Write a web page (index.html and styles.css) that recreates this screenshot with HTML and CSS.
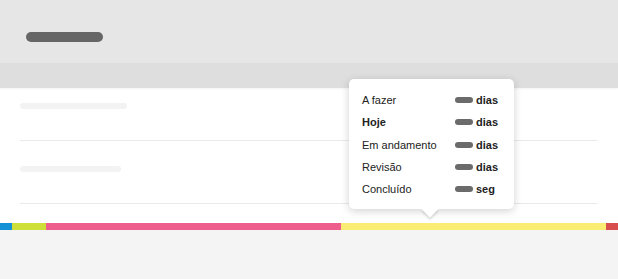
FILE: index.html
```html
<!DOCTYPE html>
<html lang="pt">
<head>
    <meta charset="UTF-8">
    <meta name="viewport" content="width=device-width, initial-scale=1.0">
    <title>Tempo por etapa</title>
    <link rel="stylesheet" href="styles.css">
</head>
<body>

    <div class="card">
        <div class="header">
            <span class="title-bar"></span>
        </div>
        <div class="tabs"></div>

        <div class="list">
            <div class="row row-first"><span class="skeleton"></span></div>
            <div class="row row-second"><span class="skeleton short"></span></div>
        </div>

        <div class="progress">
            <span class="seg blue" style="width: 12px"></span>
            <span class="seg green" style="width: 34px"></span>
            <span class="seg pink" style="width: 295px"></span>
            <span class="seg yellow" style="width: 265px"></span>
            <span class="seg red" style="flex: 1"></span>
        </div>

        <div class="footer"></div>

        <div class="tooltip">
            <div class="tip-row">
                <span class="label">A fazer</span>
                <span class="pill"></span>
                <span class="value">dias</span>
            </div>
            <div class="tip-row">
                <span class="label bold">Hoje</span>
                <span class="pill"></span>
                <span class="value">dias</span>
            </div>
            <div class="tip-row">
                <span class="label">Em andamento</span>
                <span class="pill"></span>
                <span class="value">dias</span>
            </div>
            <div class="tip-row">
                <span class="label">Revisão</span>
                <span class="pill"></span>
                <span class="value">dias</span>
            </div>
            <div class="tip-row">
                <span class="label">Concluído</span>
                <span class="pill"></span>
                <span class="value">seg</span>
            </div>
        </div>
    </div>

</body>
</html>
```

FILE: styles.css
```css
body {
    margin: 0;
    background-color: #f4f4f4;
    font-family: 'Liberation Sans', Arial, sans-serif;
    color: #222;
}

.card {
    position: relative;
    width: 618px;
    height: 279px;
    background-color: #fff;
    overflow: hidden;
}

.header {
    height: 63px;
    background-color: #e6e6e6;
    padding: 32px 0 0 26px;
    box-sizing: border-box;
}

.title-bar {
    display: block;
    width: 77px;
    height: 10px;
    border-radius: 5px;
    background-color: #666;
}

.tabs {
    height: 25px;
    background-color: #dedede;
    box-shadow: 0 1px 2px rgba(0, 0, 0, 0.05);
}

.list {
    padding: 0 21px 0 20px;
    height: 135px;
}

.row {
    border-bottom: 1px solid #e9e9e9;
    box-sizing: border-box;
}

.row-first {
    height: 53px;
    padding-top: 15px;
}

.row-second {
    height: 63px;
    padding-top: 25px;
}

.skeleton {
    display: block;
    width: 107px;
    height: 6px;
    border-radius: 3px;
    background-color: #f3f3f3;
}

.skeleton.short {
    width: 101px;
}

.progress {
    display: flex;
    height: 7px;
}

.seg {
    display: block;
    height: 100%;
}

.blue {
    background-color: #1591d5;
}

.green {
    background-color: #cfdf3a;
}

.pink {
    background-color: #ee5e8c;
}

.yellow {
    background-color: #fbec74;
}

.red {
    background-color: #d84d4d;
}

.footer {
    height: 49px;
    background-color: #f4f4f4;
}

.tooltip {
    position: absolute;
    left: 349px;
    top: 79px;
    width: 165px;
    height: 130px;
    box-sizing: border-box;
    padding: 10px 0 0 13px;
    background-color: #fff;
    border-radius: 5px;
    box-shadow: 0 2px 8px rgba(0, 0, 0, 0.18);
    font-size: 11px;
}

.tooltip::after {
    content: "";
    position: absolute;
    left: 75px;
    bottom: -6px;
    width: 12px;
    height: 12px;
    background-color: #fff;
    transform: rotate(45deg);
    box-shadow: 2px 2px 2px rgba(0, 0, 0, 0.12);
}

.tip-row {
    display: grid;
    grid-template-columns: 90px 18px auto;
    column-gap: 3px;
    align-items: center;
    height: 22.3px;
}

.bold,
.value {
    font-weight: bold;
}

.pill {
    display: block;
    width: 18px;
    height: 6px;
    border-radius: 3px;
    background-color: #6b6b6b;
}
```
